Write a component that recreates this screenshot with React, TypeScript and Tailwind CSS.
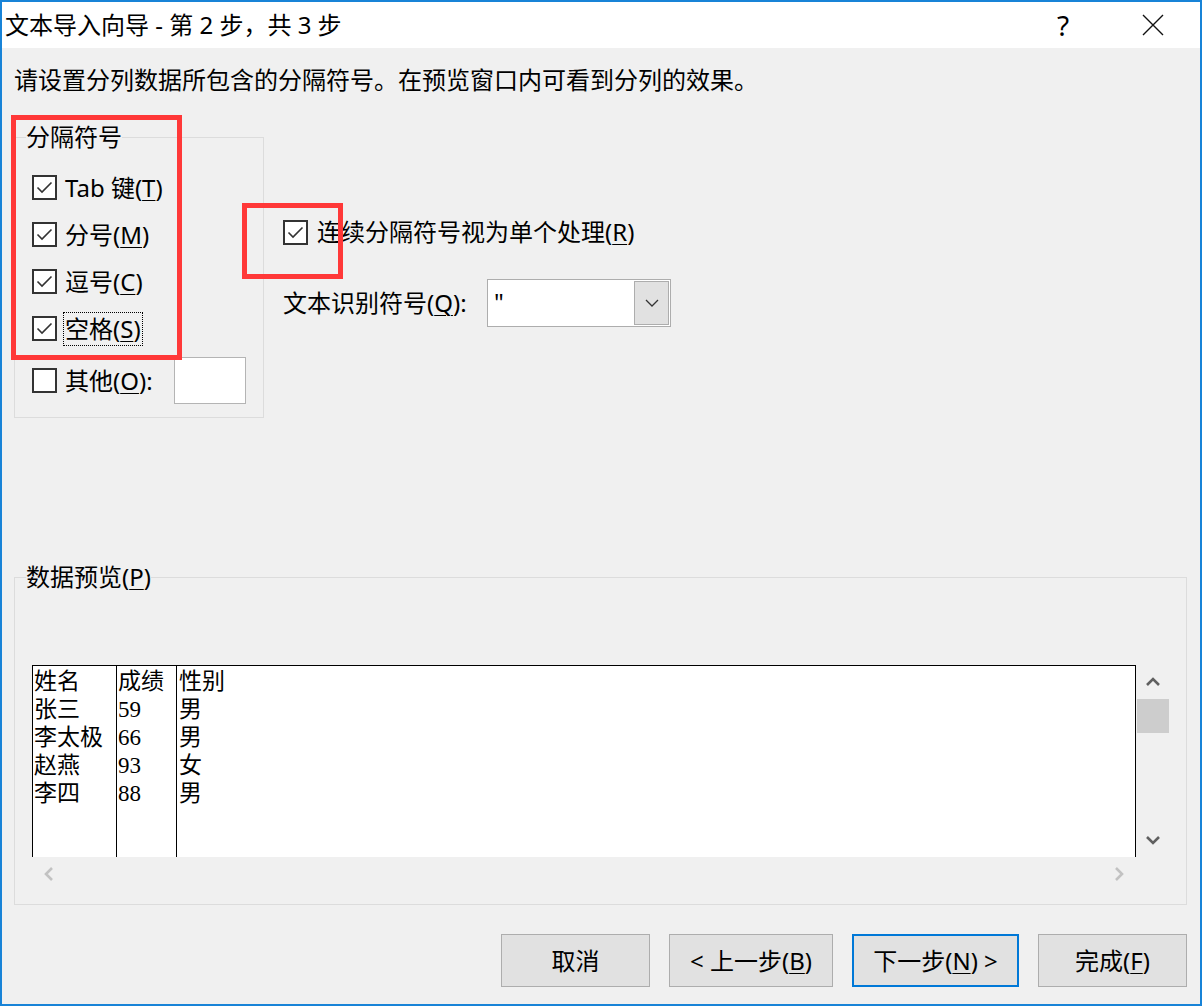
import React from 'react';

const ui = "font-['Noto_Sans','Noto_Sans_CJK_SC',sans-serif]";

function K({ children }: { children: React.ReactNode }) {
  return <span className="underline underline-offset-[3px] decoration-1">{children}</span>;
}

function CheckBox({ checked }: { checked: boolean }) {
  return (
    <div className="w-[25px] h-[25px] shrink-0 border-2 border-[#333333] bg-white flex items-center justify-center">
      {checked && (
        <svg width="21" height="21" viewBox="0 0 21 21">
          <polyline points="3.5,10.5 8,15 17.5,5.5" fill="none" stroke="#333333" strokeWidth="1.6" />
        </svg>
      )}
    </div>
  );
}

function Chevron({ dir, color }: { dir: 'up' | 'down' | 'left' | 'right'; color: string }) {
  const pts = {
    up: '1,8 7,2 13,8',
    down: '1,2 7,8 13,2',
    left: '8,1 2,7 8,13',
    right: '2,1 8,7 2,13',
  }[dir];
  const w = dir === 'up' || dir === 'down' ? 14 : 10;
  const h = dir === 'up' || dir === 'down' ? 10 : 14;
  return (
    <svg width={w} height={h} viewBox={`0 0 ${w} ${h}`}>
      <polyline points={pts} fill="none" stroke={color} strokeWidth="2.6" />
    </svg>
  );
}

function DelimRow({ checked, focused, children }: { checked: boolean; focused?: boolean; children: React.ReactNode }) {
  return (
    <div className="h-[47px] flex items-center">
      <CheckBox checked={checked} />
      <span
        className={`ml-[6px] px-px leading-[32px] border ${focused ? 'border-dotted border-black' : 'border-transparent'}`}
      >
        {children}
      </span>
    </div>
  );
}

const rows = [
  ['姓名', '成绩', '性别'],
  ['张三', '59', '男'],
  ['李太极', '66', '男'],
  ['赵燕', '93', '女'],
  ['李四', '88', '男'],
];

export default function App() {
  return (
    <div className={`relative w-[1202px] h-[1006px] border-2 border-[#1883d7] bg-[#f0f0f0] text-[24px] text-black overflow-hidden ${ui}`}>
      {/* title bar */}
      <div className="h-[46px] bg-white flex items-center pl-[3px]">
        <span className="flex-1 leading-[32px]">文本导入向导 - 第 2 步，共 3 步</span>
        <div className="w-[90px] flex justify-center text-[28px] leading-[32px]">?</div>
        <div className="w-[90px] mr-[2px] flex justify-center">
          <svg width="22" height="22" viewBox="0 0 22 22">
            <path d="M1 1 L21 21 M21 1 L1 21" stroke="#111" strokeWidth="1.4" />
          </svg>
        </div>
      </div>

      <div className="pl-[12px] pr-[13px] pt-[16px]">
        <p className="leading-[32px]">请设置分列数据所包含的分隔符号。在预览窗口内可看到分列的效果。</p>

        <div className="flex mt-[26px]">
          <fieldset className="w-[250px] h-[296px] border border-[#dcdcdc]">
            <legend className="ml-[11px] leading-[30px]">分隔符号</legend>
            <div className="pl-[17px] pt-[12px]">
              <DelimRow checked>
                Tab 键(<K>T</K>)
              </DelimRow>
              <DelimRow checked>
                分号(<K>M</K>)
              </DelimRow>
              <DelimRow checked>
                逗号(<K>C</K>)
              </DelimRow>
              <DelimRow checked focused>
                空格(<K>S</K>)
              </DelimRow>
              <div className="mt-[5px] flex items-center">
                <CheckBox checked={false} />
                <span className="ml-[6px] px-px leading-[32px] border border-transparent w-[111px]">
                  其他(<K>O</K>):
                </span>
                <div className="w-[72px] h-[47px] bg-white border border-[#b4b4b4]" />
              </div>
            </div>
          </fieldset>

          <div className="ml-[19px] pt-[94px] flex flex-col">
            <div className="h-[32px] flex items-center">
              <CheckBox checked />
              <span className="ml-[9px] leading-[32px]">
                连续分隔符号视为单个处理(<K>R</K>)
              </span>
            </div>
            <div className="mt-[31px] h-[48px] flex items-center">
              <span className="w-[204px] leading-[32px]">
                文本识别符号(<K>Q</K>):
              </span>
              <div className="w-[184px] h-[48px] bg-white border border-[#adadad] flex items-stretch">
                <span className="flex-1 pl-[6px] leading-[44px]">"</span>
                <div className="w-[35px] my-px mr-px bg-[#e1e1e1] border border-[#adadad] flex items-center justify-center">
                  <svg width="14" height="8" viewBox="0 0 14 8">
                    <polyline points="1,1 7,7 13,1" fill="none" stroke="#333" strokeWidth="1.3" />
                  </svg>
                </div>
              </div>
            </div>
          </div>
        </div>

        {/* data preview */}
        <fieldset className="mt-[144px] w-[1173px] h-[343px] border border-[#dcdcdc]">
          <legend className="ml-[11px] leading-[30px]">
            数据预览(<K>P</K>)
          </legend>
          <div className="ml-[17px] mt-[73px] w-[1137px]">
            <div className="flex h-[192px]">
              <div className="w-[1104px] bg-white border-x border-t border-black flex text-[23px] leading-[28px] font-['Liberation_Serif','Noto_Sans_CJK_SC',serif]">
                {[0, 1, 2].map((c) => (
                  <div
                    key={c}
                    className={
                      c === 0
                        ? 'w-[84px] border-r border-black pl-px pt-[2px]'
                        : c === 1
                        ? 'w-[60px] border-r border-black pl-px pt-[2px]'
                        : 'flex-1 pl-[2px] pt-[2px]'
                    }
                  >
                    {rows.map((r, i) => (
                      <div key={i}>{r[c]}</div>
                    ))}
                  </div>
                ))}
              </div>
              <div className="w-[33px] flex flex-col">
                <div className="h-[34px] flex items-center justify-center">
                  <Chevron dir="up" color="#606060" />
                </div>
                <div className="h-[34px] ml-px bg-[#cdcdcd]" />
                <div className="flex-1" />
                <div className="h-[34px] flex items-center justify-center">
                  <Chevron dir="down" color="#606060" />
                </div>
              </div>
            </div>
            <div className="h-[34px] w-[1104px] flex items-center justify-between pl-[12px] pr-[12px]">
              <Chevron dir="left" color="#c2c2c2" />
              <Chevron dir="right" color="#c2c2c2" />
            </div>
          </div>
        </fieldset>

        {/* buttons */}
        <div className="mt-[29px] flex justify-end gap-[19px]">
          <button className="w-[149px] h-[53px] border border-[#adadad] bg-[#e1e1e1]">取消</button>
          <button className="w-[164px] h-[53px] border border-[#adadad] bg-[#e1e1e1]">
            &lt; 上一步(<K>B</K>)
          </button>
          <button className="w-[167px] h-[53px] border-2 border-[#0078d7] bg-[#e1e1e1]">
            下一步(<K>N</K>) &gt;
          </button>
          <button className="w-[149px] h-[53px] border border-[#adadad] bg-[#e1e1e1]">
            完成(<K>F</K>)
          </button>
        </div>
      </div>

      {/* red annotation boxes */}
      <div className="absolute left-[9px] top-[113px] w-[171px] h-[245px] border-[5px] border-[#ff3838]" />
      <div className="absolute left-[240px] top-[201px] w-[101px] h-[76px] border-[5px] border-[#ff3838]" />
    </div>
  );
}
